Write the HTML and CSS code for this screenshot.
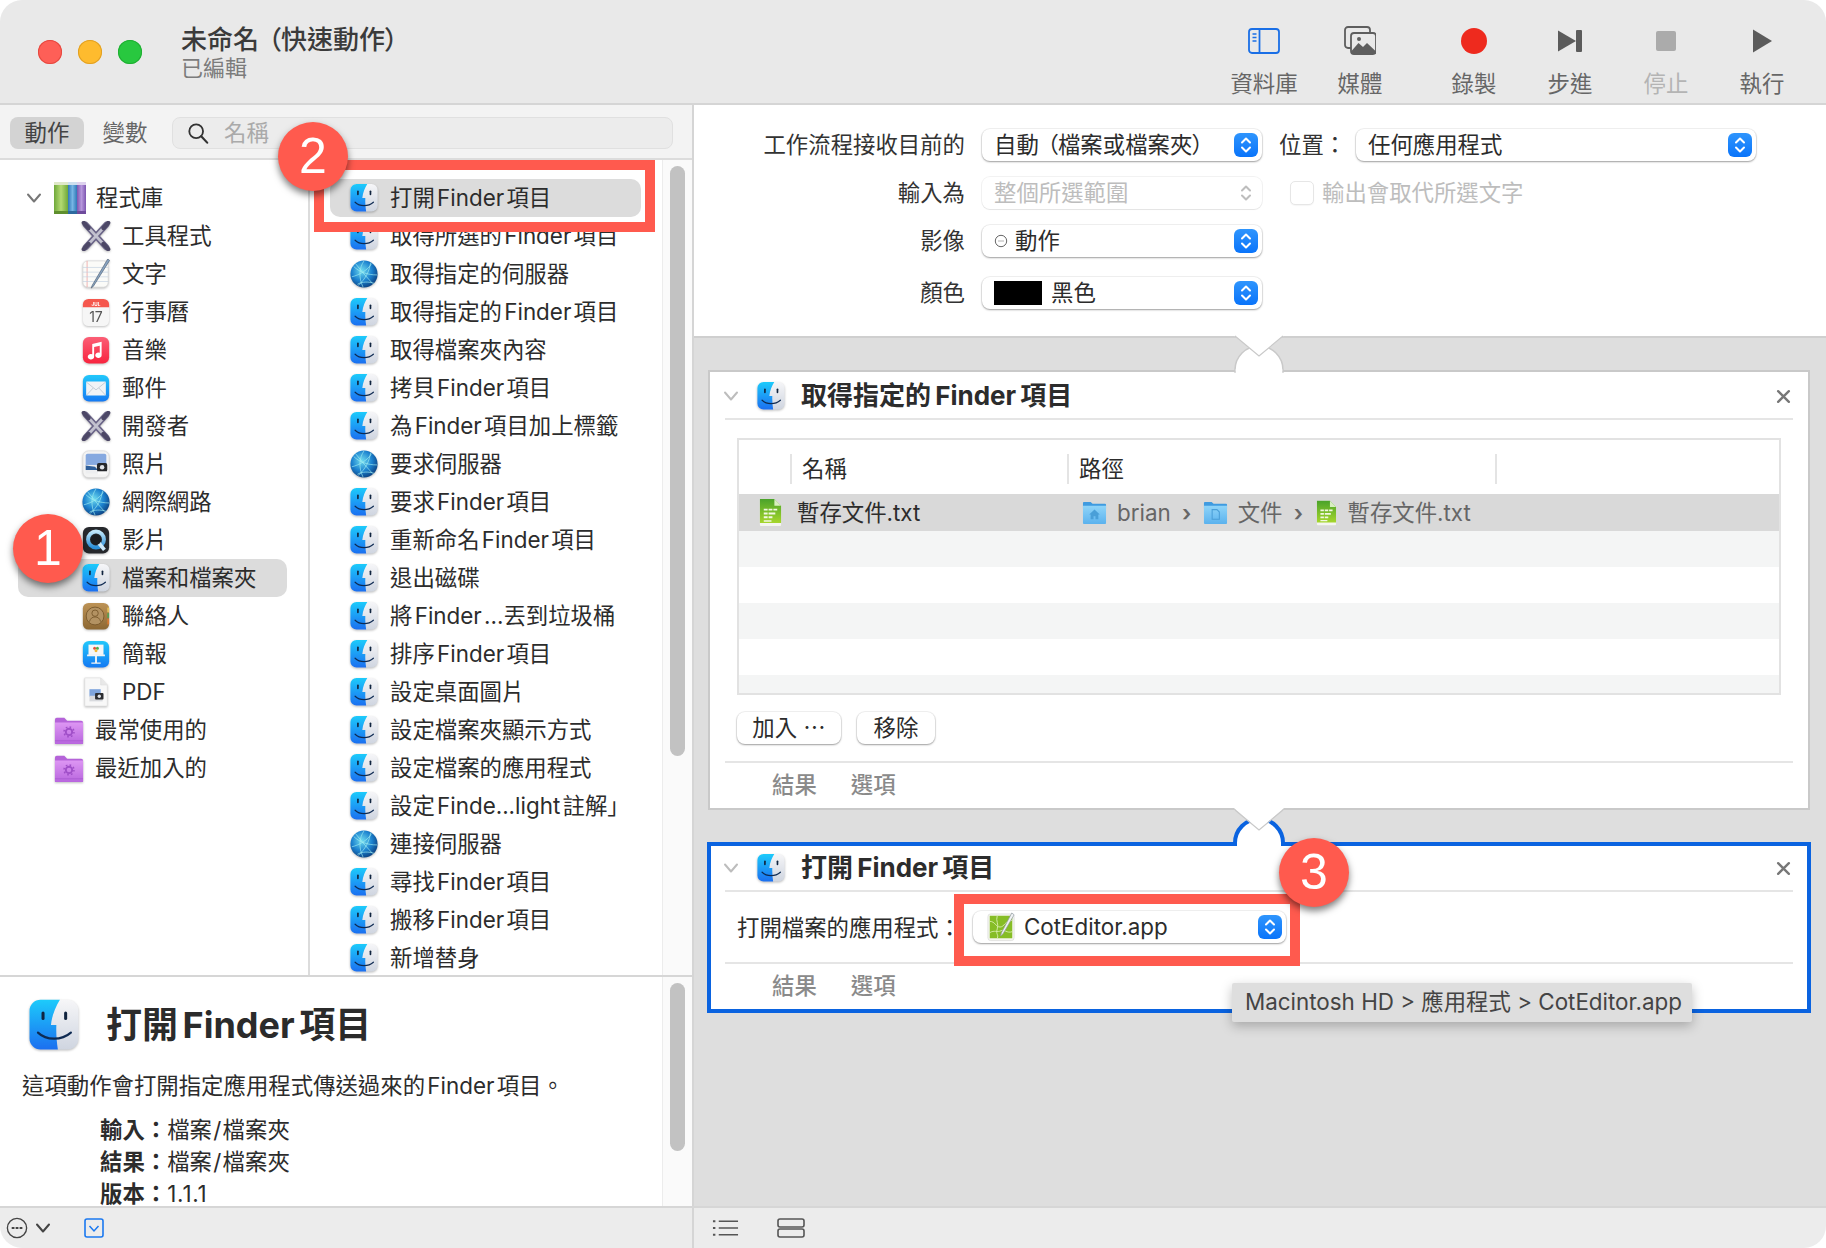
FILE: index.html
```html
<!DOCTYPE html>
<html lang="zh-Hant">
<head>
<meta charset="utf-8">
<title>未命名（快速動作）</title>
<link rel="stylesheet" href="styles.css">
</head>
<body>
<svg class="sprite" xmlns="http://www.w3.org/2000/svg">
  <defs>
    <linearGradient id="gFinderB" x1="0" y1="0" x2="0" y2="1"><stop offset="0" stop-color="#1dcbfb"/><stop offset="1" stop-color="#1b6ff0"/></linearGradient>
    <linearGradient id="gFinderW" x1="0" y1="0" x2="0" y2="1"><stop offset="0" stop-color="#f6f6f8"/><stop offset="1" stop-color="#cfd5e0"/></linearGradient>
    <radialGradient id="gGlobe" cx=".42" cy=".38" r=".68"><stop offset="0" stop-color="#6fdcef"/><stop offset=".55" stop-color="#1c82cf"/><stop offset="1" stop-color="#0a3a78"/></radialGradient>
    <linearGradient id="gStep" x1="0" y1="0" x2="0" y2="1"><stop offset="0" stop-color="#2f95fd"/><stop offset="1" stop-color="#0a74fa"/></linearGradient>
    <linearGradient id="gMusic" x1="0" y1="0" x2="0" y2="1"><stop offset="0" stop-color="#fb5f76"/><stop offset="1" stop-color="#f8233e"/></linearGradient>
    <linearGradient id="gBlue" x1="0" y1="0" x2="0" y2="1"><stop offset="0" stop-color="#22c8fb"/><stop offset="1" stop-color="#1479f3"/></linearGradient>
    <linearGradient id="gBrown" x1="0" y1="0" x2="0" y2="1"><stop offset="0" stop-color="#bd9356"/><stop offset="1" stop-color="#8c6733"/></linearGradient>
    <linearGradient id="gPurple" x1="0" y1="0" x2="0" y2="1"><stop offset="0" stop-color="#dd96f3"/><stop offset="1" stop-color="#b866de"/></linearGradient>
    <linearGradient id="gFolderBlue" x1="0" y1="0" x2="0" y2="1"><stop offset="0" stop-color="#8fd4f8"/><stop offset="1" stop-color="#5bb2ee"/></linearGradient>
    <linearGradient id="gTxt" x1="0" y1="0" x2="0" y2="1"><stop offset="0" stop-color="#4aa32a"/><stop offset="1" stop-color="#a6d62c"/></linearGradient>
    <linearGradient id="gQt" x1="0" y1="0" x2="0" y2="1"><stop offset="0" stop-color="#bfe6fa"/><stop offset="1" stop-color="#2a8fd8"/></linearGradient>
    <linearGradient id="gBookG" x1="0" y1="0" x2="1" y2="0"><stop offset="0" stop-color="#6fa83a"/><stop offset=".5" stop-color="#b4da72"/><stop offset="1" stop-color="#6fa83a"/></linearGradient>
    <linearGradient id="gBookB" x1="0" y1="0" x2="1" y2="0"><stop offset="0" stop-color="#2f79b8"/><stop offset=".5" stop-color="#77b5e4"/><stop offset="1" stop-color="#2f79b8"/></linearGradient>
    <linearGradient id="gBookP" x1="0" y1="0" x2="1" y2="0"><stop offset="0" stop-color="#7d55b0"/><stop offset=".5" stop-color="#b697dc"/><stop offset="1" stop-color="#7d55b0"/></linearGradient>
    <symbol id="finder" viewBox="0 0 32 32">
      <rect x="1.5" y="1" width="29" height="29.5" rx="6.5" fill="url(#gFinderW)"/>
      <path d="M8 1h11.500c-2.400 4-4.700 9-5.300 15h3.200c-.2 5 .2 10 .9 14.500H8A6.500 6.500 0 0 1 1.500 24V7.500A6.500 6.500 0 0 1 8 1z" fill="url(#gFinderB)"/>
      <rect x="8.600" y="8" width="1.800" height="5" rx=".9" fill="#10243f"/>
      <rect x="22" y="8" width="1.800" height="5" rx=".9" fill="#10243f"/>
      <path d="M6.500 20.500c5 4.800 14 4.800 19.500 0" fill="none" stroke="#0e2a52" stroke-width="1.300" stroke-linecap="round"/>
    </symbol>
    <symbol id="globe" viewBox="0 0 32 32">
      <circle cx="16" cy="16" r="14.500" fill="url(#gGlobe)"/>
      <g fill="none" stroke="#a4f0f2" stroke-width=".8" opacity=".85">
        <path d="M5 8c6 6 15 9 25 9M16 2c-5 7-6 18-1 28M23 4c-1 8-5 17-13 24M3 19c8-2 17-7 21-14M9 27c5-3 12-3 18-1M16 16l9 10M16 16l-9-11"/>
      </g>
    </symbol>
    <symbol id="tools" viewBox="0 0 32 32">
      <g stroke-linecap="round">
        <path d="M5 4l22 24M27 4L5 28" stroke="#6a6488" stroke-width="6.400"/>
        <path d="M5 4l22 24M27 4L5 28" stroke="#c2c1cf" stroke-width="2.800"/>
        <path d="M3 2l5 5.500M29 2l-5 5.500M3 30l5-5.500M29 30l-5-5.500" stroke="#4c4766" stroke-width="4.600"/>
      </g>
    </symbol>
    <symbol id="note" viewBox="0 0 32 32">
      <rect x="2" y="2" width="27" height="28" rx="5" fill="#fbfbf8" stroke="#d6d6d6" stroke-width=".8"/>
      <path d="M6.500 2v28" stroke="#ee9d9d" stroke-width=".8"/>
      <path d="M2 9h27M2 14h27M2 19h27M2 24h27" stroke="#c2cfe0" stroke-width=".7"/>
      <path d="M28.500 0L12 28l-1.200 3 2.400-1.900L30.500 1.500z" fill="#8aa6c4" stroke="#4f5f71" stroke-width=".7"/>
    </symbol>
    <symbol id="calendar" viewBox="0 0 32 32">
      <rect x="2" y="2" width="28" height="29" rx="6" fill="#f6f6f6"/>
      <path d="M8 2h16a6 6 0 0 1 6 6v3H2V8a6 6 0 0 1 6-6z" fill="#f5574d"/>
      <text class="cal-month" x="16" y="9.300" text-anchor="middle">JUL</text>
      <text class="cal-day" x="16" y="26.500" text-anchor="middle">17</text>
    </symbol>
    <symbol id="music" viewBox="0 0 32 32">
      <rect x="2" y="2" width="28" height="28.500" rx="6.500" fill="url(#gMusic)"/>
      <path d="M12 9.500l10-2.300v14.300a3.400 2.900 0 1 1-2-2.600v-7.400l-6 1.400v10.200a3.400 2.900 0 1 1-2-2.600z" fill="#fff"/>
    </symbol>
    <symbol id="mail" viewBox="0 0 32 32">
      <rect x="2" y="2" width="28" height="28.500" rx="6.500" fill="url(#gBlue)"/>
      <rect x="5.500" y="9" width="21" height="15" rx="1" fill="#f1f3f6"/>
      <path d="M5.500 9.500L16 18l10.500-8.500M5.500 24l7.500-8M26.500 24L19 16" fill="none" stroke="#b6c0cc" stroke-width=".8"/>
    </symbol>
    <symbol id="photo" viewBox="0 0 32 32">
      <rect x="2" y="2" width="28" height="28.500" rx="6" fill="#f3f3f3" stroke="#d8d8d8" stroke-width=".7"/>
      <path d="M7 5h18a2 2 0 0 1 2 2v11H5V7a2 2 0 0 1 2-2z" fill="#86a9e0"/>
      <rect x="5" y="17" width="22" height="9" fill="#edeef0"/>
      <path d="M5 17.500l10 1.500 3 3.500H5z" fill="#2f5f9a"/>
      <rect x="17" y="15" width="11" height="9" rx="2" fill="#25272b"/>
      <circle cx="22.500" cy="19.500" r="2.400" fill="#dfe3e8"/>
      <rect x="18" y="24" width="9" height="3" fill="#fafafa"/>
    </symbol>
    <symbol id="qt" viewBox="0 0 32 32">
      <rect x="2" y="2" width="28" height="28.500" rx="6.500" fill="#26282c"/>
      <circle cx="16" cy="15.500" r="8.500" fill="none" stroke="url(#gQt)" stroke-width="4.200"/>
      <path d="M18 18l7 8.500" stroke="#cde9fa" stroke-width="4"/>
      <circle cx="16" cy="15.500" r="5.500" fill="#1a1c20"/>
    </symbol>
    <symbol id="contacts" viewBox="0 0 32 32">
      <rect x="2" y="2" width="28" height="28.500" rx="6" fill="url(#gBrown)"/>
      <rect x="28" y="7" width="2" height="5" fill="#e4c15a"/><rect x="28" y="13" width="2" height="5" fill="#5a9d52"/><rect x="28" y="19" width="2" height="6" fill="#d67a33"/>
      <circle cx="15" cy="16" r="9.500" fill="#b39262" stroke="#7a5a2d" stroke-width="1"/>
      <circle cx="15" cy="13" r="3.400" fill="none" stroke="#7a5a2d" stroke-width="1"/>
      <path d="M9 22c1-3.500 3-5 6-5s5 1.500 6 5" fill="none" stroke="#7a5a2d" stroke-width="1"/>
    </symbol>
    <symbol id="keynote" viewBox="0 0 32 32">
      <rect x="2" y="2" width="28" height="28.500" rx="6.500" fill="url(#gBlue)"/>
      <rect x="8" y="6" width="16" height="11" fill="#f6f6f6"/>
      <path d="M6.500 16.500h19v1.800h-19zM15 18h2v7h-2zM11 25h10v1.500H11z" fill="#f4f4f4"/>
      <circle cx="14.500" cy="10" r="1.600" fill="#e8503c"/><circle cx="17.500" cy="10" r="1.600" fill="#4cae4f"/><circle cx="16" cy="12.500" r="1.600" fill="#f2b632"/>
    </symbol>
    <symbol id="pdf" viewBox="0 0 32 32">
      <path d="M4 1h17l7 7.500V30a1 1 0 0 1-1 1H5a1 1 0 0 1-1-1z" fill="#f8f8f8" stroke="#dedede" stroke-width=".7"/>
      <path d="M21 1V8.500h7" fill="#e8e8e8" stroke="#dedede" stroke-width=".7"/>
      <rect x="9" y="13" width="12" height="8" fill="#7fa5dd"/>
      <rect x="9" y="20" width="14" height="6" fill="#d8dade"/>
      <rect x="15" y="17" width="9" height="7" rx="1" fill="#2b2d31"/>
      <circle cx="19.500" cy="20.500" r="1.800" fill="#dfe3e8"/>
    </symbol>
    <symbol id="folder" viewBox="0 0 32 32">
      <path d="M1 5a2 2 0 0 1 2-2h8l3 3h15a2 2 0 0 1 2 2v22a1 1 0 0 1-1 1H2a1 1 0 0 1-1-1z" fill="#b563d9"/>
      <path d="M1 8h30v22a1 1 0 0 1-1 1H2a1 1 0 0 1-1-1z" fill="url(#gPurple)"/>
      <path d="M1 27.500h30" stroke="#a554cd" stroke-width=".7"/>
      <circle cx="16" cy="18" r="3.400" fill="none" stroke="#a04fc8" stroke-width="2"/>
      <circle cx="16" cy="18" r="5.300" fill="none" stroke="#a04fc8" stroke-width="1.600" stroke-dasharray="1.800 2.360"/>
    </symbol>
    <symbol id="library" viewBox="0 0 32 34">
      <rect x="0" y="1" width="14" height="32" rx="1.500" fill="url(#gBookG)"/>
      <rect x="0" y="1" width="14" height="3" fill="#dfe8c8"/>
      <rect x="0" y="30" width="14" height="3" fill="#5f8f2e"/>
      <rect x="14" y="1" width="9" height="32" rx="1" fill="url(#gBookB)"/>
      <rect x="14" y="1" width="9" height="3" fill="#cddfee"/>
      <rect x="14" y="30" width="9" height="3" fill="#2d6a9f"/>
      <rect x="23" y="1" width="9" height="32" rx="1" fill="url(#gBookP)"/>
      <rect x="23" y="1" width="9" height="3" fill="#ded2ee"/>
      <rect x="23" y="30" width="9" height="3" fill="#6e4b9c"/>
    </symbol>
    <symbol id="txt" viewBox="0 0 26 30">
      <path d="M2 1h15l7 7v20a1 1 0 0 1-1 1H3a1 1 0 0 1-1-1z" fill="#f4f5f0"/>
      <path d="M2 1h15l7 7v18H2z" fill="url(#gTxt)"/>
      <path d="M17 1v7h7z" fill="#d8eec0"/>
      <path d="M6 11h4v2H6zM11 11h4v2h-4zM16 11h4v2h-4zM6 15h4v2H6zM11 15h7v2h-7zM6 19h4v2H6zM11 19h4v2h-4zM6 23h8v1.500H6z" fill="#f2f8e2"/>
    </symbol>
    <symbol id="folder-home" viewBox="0 0 26 26">
      <path d="M1 3a1 1 0 0 1 1-1h7l2 2h13a1 1 0 0 1 1 1v4H1z" fill="#3f9be0"/>
      <path d="M1 6h24v18a1 1 0 0 1-1 1H2a1 1 0 0 1-1-1z" fill="url(#gFolderBlue)"/>
      <path d="M13 10l-5.500 5h1.500v5h3v-3h2v3h3v-5h1.500z" fill="#4a9fd8"/>
    </symbol>
    <symbol id="folder-doc" viewBox="0 0 26 26">
      <path d="M1 3a1 1 0 0 1 1-1h7l2 2h13a1 1 0 0 1 1 1v4H1z" fill="#3f9be0"/>
      <path d="M1 6h24v18a1 1 0 0 1-1 1H2a1 1 0 0 1-1-1z" fill="url(#gFolderBlue)"/>
      <path d="M9.500 10h5l2.500 2.500V20H9.500z" fill="none" stroke="#4a9fd8" stroke-width="1.100"/>
    </symbol>
    <symbol id="cot" viewBox="0 0 32 32">
      <rect x="2" y="2" width="28" height="28.500" rx="3" fill="#f4f6ee" stroke="#d8d8d8" stroke-width=".7"/>
      <rect x="4" y="4" width="24" height="24" fill="#86bd26"/>
      <path d="M4 10c6 0 6 6 11 6s5-7 13-7M4 22c5-3 8 0 12-2s6 3 12 1M12 4c-2 6 2 8 0 14s2 6 0 10" fill="none" stroke="#d5ecaa" stroke-width="1"/>
      <path d="M27.500 1l-11 21-1 3.500 2.700-2.300L30 3z" fill="#f0f2f4" stroke="#8d969e" stroke-width=".7"/>
    </symbol>
    <symbol id="stepper" viewBox="0 0 24 24">
      <rect width="24" height="24" rx="6" fill="url(#gStep)"/>
      <path d="M8 9.500l4-4 4 4M8 14.500l4 4 4-4" fill="none" stroke="#fff" stroke-width="2" stroke-linecap="round" stroke-linejoin="round"/>
    </symbol>
    <symbol id="stepper-off" viewBox="0 0 24 24">
      <path d="M8 9.500l4-4 4 4M8 14.500l4 4 4-4" fill="none" stroke="#bdbdbd" stroke-width="2" stroke-linecap="round" stroke-linejoin="round"/>
    </symbol>
    <symbol id="chev" viewBox="0 0 16 12">
      <path d="M2 2.500l6 7 6-7" fill="none" stroke="currentColor" stroke-width="2" stroke-linecap="round" stroke-linejoin="round"/>
    </symbol>
  </defs>
</svg>

<div class="window">
  <header class="toolbar">
    <div class="lights">
      <span class="light light-red"></span>
      <span class="light light-yellow"></span>
      <span class="light light-green"></span>
    </div>
    <div class="doc">
      <div class="doc-title">未命名<span class="paren">（快速動作）</span></div>
      <div class="doc-sub">已編輯</div>
    </div>
    <nav class="tools">
      <div class="tool">
        <svg class="tool-icon" viewBox="0 0 32 30"><rect x="1" y="3" width="30" height="24" rx="3" fill="none" stroke="#1a6fe6" stroke-width="1.800"/><path d="M11.500 3v24" stroke="#1a6fe6" stroke-width="1.800"/><path d="M4.500 8h4M4.500 11.500h4M4.500 15h4" stroke="#1a6fe6" stroke-width="1.500"/></svg>
        <span class="tool-label">資料庫</span>
      </div>
      <div class="tool">
        <svg class="tool-icon" viewBox="0 0 32 30"><rect x="1" y="1" width="25" height="21" rx="3" fill="none" stroke="#5e5e5e" stroke-width="1.800"/><rect x="7" y="7" width="25" height="21" rx="3" fill="#e9e9e9" stroke="#5e5e5e" stroke-width="1.800"/><path d="M7.500 25l7-8 4.500 4 4-4 8.500 8v2a1 1 0 0 1-1 1H9a1.500 1.500 0 0 1-1.500-1.500z" fill="#5e5e5e"/><circle cx="15" cy="13" r="2" fill="#5e5e5e"/></svg>
        <span class="tool-label">媒體</span>
      </div>
      <div class="tool tool-gap">
        <span class="record"></span>
        <span class="tool-label">錄製</span>
      </div>
      <div class="tool">
        <svg class="tool-icon" viewBox="0 0 32 30"><path d="M4 4.500l18 10.500-18 10.500z" fill="#5b5b5b"/><rect x="22" y="4" width="6" height="22" rx="1" fill="#5b5b5b"/></svg>
        <span class="tool-label">步進</span>
      </div>
      <div class="tool tool-off">
        <span class="stop"></span>
        <span class="tool-label">停止</span>
      </div>
      <div class="tool">
        <svg class="tool-icon" viewBox="0 0 32 30"><path d="M7 3.500l19 11.500-19 11.500z" fill="#5b5b5b"/></svg>
        <span class="tool-label">執行</span>
      </div>
    </nav>
  </header>

  <main class="main">
    <section class="left">
      <div class="tabs">
        <span class="tab tab-on">動作</span>
        <span class="tab">變數</span>
        <div class="search">
          <svg class="search-icon" viewBox="0 0 24 24"><circle cx="10" cy="10" r="7.500" fill="none" stroke="#333" stroke-width="2"/><path d="M15.500 15.500l6.500 7" stroke="#333" stroke-width="2.400" stroke-linecap="round"/></svg>
          <span class="search-text">名稱</span>
        </div>
      </div>
      <div class="browser">
        <ul class="source">
          <li class="src-top"><svg class="src-chev"><use href="#chev"/></svg><svg class="src-icon-top"><use href="#library"/></svg><span>程式庫</span></li>
          <li class="src"><svg class="ic"><use href="#tools"/></svg><span>工具程式</span></li>
          <li class="src"><svg class="ic"><use href="#note"/></svg><span>文字</span></li>
          <li class="src"><svg class="ic"><use href="#calendar"/></svg><span>行事曆</span></li>
          <li class="src"><svg class="ic"><use href="#music"/></svg><span>音樂</span></li>
          <li class="src"><svg class="ic"><use href="#mail"/></svg><span>郵件</span></li>
          <li class="src"><svg class="ic"><use href="#tools"/></svg><span>開發者</span></li>
          <li class="src"><svg class="ic"><use href="#photo"/></svg><span>照片</span></li>
          <li class="src"><svg class="ic"><use href="#globe"/></svg><span>網際網路</span></li>
          <li class="src"><svg class="ic"><use href="#qt"/></svg><span>影片</span></li>
          <li class="src src-on"><svg class="ic"><use href="#finder"/></svg><span>檔案和檔案夾</span></li>
          <li class="src"><svg class="ic"><use href="#contacts"/></svg><span>聯絡人</span></li>
          <li class="src"><svg class="ic"><use href="#keynote"/></svg><span>簡報</span></li>
          <li class="src"><svg class="ic"><use href="#pdf"/></svg><span>PDF</span></li>
          <li class="src-folder"><svg class="ic"><use href="#folder"/></svg><span>最常使用的</span></li>
          <li class="src-folder"><svg class="ic"><use href="#folder"/></svg><span>最近加入的</span></li>
        </ul>
        <ul class="actions">
          <li class="act act-on"><svg class="ic"><use href="#finder"/></svg><span>打開 Finder 項目</span></li>
          <li class="act"><svg class="ic"><use href="#finder"/></svg><span>取得所選的 Finder 項目</span></li>
          <li class="act"><svg class="ic"><use href="#globe"/></svg><span>取得指定的伺服器</span></li>
          <li class="act"><svg class="ic"><use href="#finder"/></svg><span>取得指定的 Finder 項目</span></li>
          <li class="act"><svg class="ic"><use href="#finder"/></svg><span>取得檔案夾內容</span></li>
          <li class="act"><svg class="ic"><use href="#finder"/></svg><span>拷貝 Finder 項目</span></li>
          <li class="act"><svg class="ic"><use href="#finder"/></svg><span>為 Finder 項目加上標籤</span></li>
          <li class="act"><svg class="ic"><use href="#globe"/></svg><span>要求伺服器</span></li>
          <li class="act"><svg class="ic"><use href="#finder"/></svg><span>要求 Finder 項目</span></li>
          <li class="act"><svg class="ic"><use href="#finder"/></svg><span>重新命名 Finder 項目</span></li>
          <li class="act"><svg class="ic"><use href="#finder"/></svg><span>退出磁碟</span></li>
          <li class="act"><svg class="ic"><use href="#finder"/></svg><span>將 Finder ...丟到垃圾桶</span></li>
          <li class="act"><svg class="ic"><use href="#finder"/></svg><span>排序 Finder 項目</span></li>
          <li class="act"><svg class="ic"><use href="#finder"/></svg><span>設定桌面圖片</span></li>
          <li class="act"><svg class="ic"><use href="#finder"/></svg><span>設定檔案夾顯示方式</span></li>
          <li class="act"><svg class="ic"><use href="#finder"/></svg><span>設定檔案的應用程式</span></li>
          <li class="act"><svg class="ic"><use href="#finder"/></svg><span>設定 Finde...light 註解」</span></li>
          <li class="act"><svg class="ic"><use href="#globe"/></svg><span>連接伺服器</span></li>
          <li class="act"><svg class="ic"><use href="#finder"/></svg><span>尋找 Finder 項目</span></li>
          <li class="act"><svg class="ic"><use href="#finder"/></svg><span>搬移 Finder 項目</span></li>
          <li class="act"><svg class="ic"><use href="#finder"/></svg><span>新增替身</span></li>
        </ul>
        <div class="track track-list"><span class="thumb thumb-list"></span></div>
      </div>
      <div class="info">
        <div class="info-body">
          <div class="info-head">
            <svg class="info-icon"><use href="#finder"/></svg>
            <h1 class="info-title">打開 Finder 項目</h1>
          </div>
          <p class="info-desc">這項動作會打開指定應用程式傳送過來的 Finder 項目。</p>
          <dl class="info-meta">
            <div class="meta-row"><dt>輸入：</dt><dd>檔案 / 檔案夾</dd></div>
            <div class="meta-row"><dt>結果：</dt><dd>檔案 / 檔案夾</dd></div>
            <div class="meta-row"><dt>版本：</dt><dd class="meta-version">1.1.1</dd></div>
          </dl>
        </div>
        <div class="track track-info"><span class="thumb thumb-info"></span></div>
      </div>
    </section>

    <section class="right">
      <form class="form">
        <label class="form-label">工作流程接收目前的</label>
        <div class="popup"><span class="popup-text">自動<span class="paren paren-small">（檔案或檔案夾）</span></span><svg class="stepper"><use href="#stepper"/></svg></div>
        <label class="form-label-inline">位置：</label>
        <div class="popup popup-wide"><span class="popup-text">任何應用程式</span><svg class="stepper"><use href="#stepper"/></svg></div>

        <label class="form-label">輸入為</label>
        <div class="popup popup-off"><span class="popup-text">整個所選範圍</span><svg class="stepper"><use href="#stepper-off"/></svg></div>
        <div class="check"><span class="check-box"></span><span>輸出會取代所選文字</span></div>

        <label class="form-label">影像</label>
        <div class="popup"><svg class="more-mini" viewBox="0 0 14 14"><circle cx="7" cy="7" r="5.700" fill="none" stroke="#666" stroke-width="1"/><path d="M4.500 7h1M6.500 7h1M8.500 7h1" stroke="#666" stroke-width="1"/></svg><span class="popup-text">動作</span><svg class="stepper"><use href="#stepper"/></svg></div>
        <span class="form-fill"></span>

        <label class="form-label form-last">顏色</label>
        <div class="popup form-last"><span class="swatch"></span><span class="popup-text">黑色</span><svg class="stepper"><use href="#stepper"/></svg></div>
      </form>

      <div class="canvas">
        <article class="card card-first">
          <svg class="link link-top" viewBox="0 0 52 36"><path d="M2 36v-2a24 24 0 0 1 48 0v2z" fill="#fff" stroke="#c9c9c9" stroke-width="1.500"/><path d="M2.800 33h46.400v5H2.800z" fill="#fff"/><path d="M-1-2h54L26 20z" fill="#fff"/><path d="M2 0l24 20L50 0" fill="none" stroke="#c9c9c9" stroke-width="1.200"/></svg>
          <div class="card-head">
            <svg class="card-chev"><use href="#chev"/></svg>
            <svg class="card-icon"><use href="#finder"/></svg>
            <h2 class="card-title">取得指定的 Finder 項目</h2>
            <svg class="card-close" viewBox="0 0 14 14"><path d="M2 2l10 10M12 2L2 12" stroke="#777" stroke-width="2.200" stroke-linecap="round"/></svg>
          </div>
          <div class="table">
            <div class="thead">
              <span class="th th-first"></span><span class="th">名稱</span><span class="th">路徑</span><span class="th"></span>
            </div>
            <div class="tr tr-on">
              <div class="td-name"><svg class="ic-txt"><use href="#txt"/></svg><span>暫存文件.txt</span></div>
              <div class="td-path">
                <svg class="ic-folder"><use href="#folder-home"/></svg><span>brian</span><span class="crumb">›</span>
                <svg class="ic-folder"><use href="#folder-doc"/></svg><span>文件</span><span class="crumb">›</span>
                <svg class="ic-txt-small"><use href="#txt"/></svg><span>暫存文件.txt</span>
              </div>
            </div>
            <div class="tr tr-alt"></div>
            <div class="tr"></div>
            <div class="tr tr-alt"></div>
            <div class="tr"></div>
            <div class="tr tr-alt"></div>
          </div>
          <div class="btns">
            <span class="btn btn-add">加入 ⋯</span>
            <span class="btn btn-remove">移除</span>
          </div>
          <div class="card-foot"><span>結果</span><span>選項</span></div>
        </article>

        <article class="card card-sel">
          <svg class="link link-sel" viewBox="0 0 56 36"><path d="M4 36v-3a24 24 0 0 1 48 0v3" fill="#fff" stroke="#0a63e0" stroke-width="4"/><path d="M6 32h44v5H6z" fill="#fff"/><path d="M3-2h50L28 20z" fill="#fff"/><path d="M4 0l24 20L52 0" fill="none" stroke="#c9c9c9" stroke-width="1.200"/></svg>
          <div class="card-head card-head-sel">
            <svg class="card-chev"><use href="#chev"/></svg>
            <svg class="card-icon"><use href="#finder"/></svg>
            <h2 class="card-title">打開 Finder 項目</h2>
            <svg class="card-close" viewBox="0 0 14 14"><path d="M2 2l10 10M12 2L2 12" stroke="#777" stroke-width="2.200" stroke-linecap="round"/></svg>
          </div>
          <div class="open-row">
            <label class="open-label">打開檔案的應用程式：</label>
            <div class="popup popup-app"><svg class="ic-cot"><use href="#cot"/></svg><span class="popup-text app-name">CotEditor.app</span><svg class="stepper"><use href="#stepper"/></svg></div>
          </div>
          <div class="card-foot"><span>結果</span><span>選項</span></div>
        </article>
      </div>
    </section>
  </main>

  <footer class="bottom">
    <div class="bottom-left">
      <svg class="more-icon" viewBox="0 0 24 24"><circle cx="12" cy="12" r="10.500" fill="none" stroke="#444" stroke-width="1.500"/><path d="M7 12h1.500M11.300 12h1.500M15.600 12h1.500" stroke="#444" stroke-width="2" stroke-linecap="round"/></svg>
      <svg class="bottom-chev"><use href="#chev"/></svg>
      <svg class="box-icon" viewBox="0 0 20 20"><rect x="1" y="1" width="18" height="18" rx="2" fill="none" stroke="#1a78f0" stroke-width="1.600"/><path d="M5.500 8l4.500 5 4.500-5" fill="none" stroke="#1a78f0" stroke-width="1.500"/></svg>
    </div>
    <div class="bottom-right">
      <svg class="list-icon" viewBox="0 0 28 18"><path d="M7 2h20M7 9h20M7 16h20" stroke="#555" stroke-width="1.600"/><path d="M1 2h2.500M1 9h2.500M1 16h2.500" stroke="#555" stroke-width="2"/></svg>
      <svg class="stack-icon" viewBox="0 0 28 20"><rect x="1" y="1" width="26" height="8" rx="2" fill="none" stroke="#555" stroke-width="1.600"/><rect x="1" y="11" width="26" height="8" rx="2" fill="none" stroke="#555" stroke-width="1.600"/></svg>
    </div>
  </footer>

  <div class="mark mark-action"></div>
  <div class="mark mark-app"></div>
  <div class="badge badge-1">1</div>
  <div class="badge badge-2">2</div>
  <div class="badge badge-3">3</div>
  <div class="tooltip">Macintosh HD &gt; 應用程式 &gt; CotEditor.app</div>
</div>
</body>
</html>
```

FILE: styles.css
```css
* { box-sizing: border-box; }
html, body { margin: 0; padding: 0; }
body {
  width: 1826px;
  height: 1248px;
  overflow: hidden;
  background: #fff;
  font-family: "Inter", "Noto Sans CJK TC", sans-serif;
  font-size: 22.4px;
  line-height: 30px;
  color: #2c2c2c;
}
ul, dl, dd, h1, h2, p { margin: 0; padding: 0; list-style: none; }
.sprite { position: absolute; width: 0; height: 0; }
.cal-month { font: 700 5px "Inter", sans-serif; fill: #fff; }
.cal-day { font: 400 15px "Inter", sans-serif; fill: #555; }

.window {
  position: relative;
  width: 1826px;
  height: 1248px;
  display: flex;
  flex-direction: column;
  border-radius: 22px;
  overflow: hidden;
  background: #fff;
}

/* toolbar */
.toolbar {
  height: 105px;
  flex: none;
  display: flex;
  align-items: center;
  background: #e9e9e9;
  border-bottom: 2px solid #d5d5d5;
  padding-left: 38px;
  padding-right: 16px;
}
.lights { display: flex; gap: 16px; }
.light { width: 24px; height: 24px; border-radius: 50%; }
.light-red { background: #fe5f57; box-shadow: inset 0 0 0 1px #e5483f; }
.light-yellow { background: #febb2e; box-shadow: inset 0 0 0 1px #e1a023; }
.light-green { background: #28c83f; box-shadow: inset 0 0 0 1px #1fae32; }
.doc { margin-left: 39px; }
.doc-title { font-size: 26px; line-height: 34px; font-weight: 500; color: #3b3b3b; }
.paren { font-feature-settings: "palt"; margin-left: 9px; }
.paren-small { margin-left: 8px; }
.doc-sub { font-size: 22px; line-height: 24px; margin-top: -1px; color: #7c7c7c; }
.tools { margin-left: auto; display: flex; }
.tool {
  width: 96px;
  height: 103px;
  display: flex;
  flex-direction: column;
  align-items: center;
  padding-top: 26px;
  color: #666;
}
.tool-gap { margin-left: 18px; }
.tool-off { color: #b4b4b4; }
.tool-icon { width: 32px; height: 30px; display: block; }
.tool-label { margin-top: 15px; line-height: 26px; }
.record { width: 26px; height: 26px; margin: 2px 0; border-radius: 50%; background: #ee2a1e; }
.stop { width: 20px; height: 20px; margin: 5px 0; border-radius: 2px; background: #ababab; }

/* main */
.main { flex: 1; display: flex; min-height: 0; }
.left {
  width: 694px;
  flex: none;
  display: flex;
  flex-direction: column;
  border-right: 2px solid #d5d5d5;
}
.tabs {
  height: 55px;
  flex: none;
  display: flex;
  align-items: flex-start;
  padding: 12px 0 0 10px;
  background: #f3f3f3;
  border-bottom: 2px solid #dcdcdc;
  color: #666;
}
.tab { width: 74px; height: 32px; line-height: 32px; text-align: center; border-radius: 8px; }
.tab + .tab { width: 82px; }
.tab-on { background: #d3d3d3; color: #444; }
.search {
  margin-left: 6px;
  width: 501px;
  height: 32px;
  display: flex;
  align-items: center;
  gap: 15px;
  padding-left: 14px;
  background: #ececec;
  border: 1px solid #e0e0e0;
  border-radius: 8px;
}
.search-icon { width: 22px; height: 22px; }
.search-text { color: #aaa; }

.browser {
  height: 817px;
  flex: none;
  display: flex;
  overflow: hidden;
  border-bottom: 2px solid #d6d6d6;
}
.source {
  width: 310px;
  flex: none;
  padding-top: 19px;
  border-right: 2px solid #dcdcdc;
}
.source li { height: 38px; display: flex; align-items: center; }
.ic { width: 30px; height: 30px; flex: none; filter: drop-shadow(0 1px 1px rgba(0,0,0,.25)); }
.src-top { padding-left: 26px; }
.src-chev { width: 16px; height: 12px; color: #777; flex: none; }
.src-icon-top { width: 32px; height: 34px; margin-left: 12px; margin-right: 10px; flex: none; }
.src { margin-right: 21px; margin-left: 18px; border-radius: 10px; padding-left: 63px; }
.src .ic { margin-right: 11px; }
.src-on { background: #dcdcdc; }
.src-folder { padding-left: 54px; }
.src-folder .ic { margin-right: 11px; }

.actions { flex: 1; padding-top: 19px; min-width: 0; word-spacing: -4px; }
.act {
  height: 38px;
  margin: 0 21px 0 20px;
  padding-left: 19px;
  display: flex;
  align-items: center;
  gap: 11px;
  border-radius: 10px;
  white-space: nowrap;
}
.act-on { background: #dcdcdc; }

.track { width: 30px; flex: none; background: #fafafa; border-left: 1px solid #ececec; position: relative; padding: 6px 7px 0 7px; }
.thumb { display: block; width: 15px; border-radius: 8px; background: #c2c2c2; }
.thumb-list { height: 590px; }
.thumb-info { height: 168px; }

.info { flex: 1; display: flex; min-height: 0; overflow: hidden; }
.info-body { flex: 1; min-width: 0; }
.info-head { display: flex; align-items: center; gap: 25px; padding: 21px 0 0 27px; }
.info-icon { width: 54px; height: 54px; flex: none; filter: drop-shadow(0 1px 1px rgba(0,0,0,.25)); }
.info-title { font-size: 36px; line-height: 54px; font-weight: 700; color: #2b2b2b; word-spacing: -4px; }
.info-desc { margin-top: 19px; padding-left: 22px; word-spacing: -4px; white-space: nowrap; }
.info-meta { margin-top: 13px; padding-left: 100px; }
.meta-row { display: flex; line-height: 32px; }
.meta-row dt { font-weight: 700; }
.meta-row dd { word-spacing: -5px; }
.meta-row .meta-version { letter-spacing: .8px; }

/* right */
.right { flex: 1; min-width: 0; display: flex; flex-direction: column; }
.form {
  height: 233px;
  flex: none;
  display: grid;
  grid-template-columns: 271px 280px 60px 400px;
  grid-auto-rows: 32px;
  column-gap: 17px;
  row-gap: 16px;
  align-items: center;
  padding-top: 24px;
  background: #fff;
  border-bottom: 2px solid #cfcfcf;
}
.form-label { text-align: right; color: #333; }
.form-label-inline { white-space: nowrap; color: #333; }
.form-last { position: relative; top: 4px; }
.form-fill { grid-column: 3 / 5; }
.popup {
  height: 32px;
  display: flex;
  align-items: center;
  padding: 0 4px 0 12px;
  background: #fff;
  border-radius: 8px;
  box-shadow: 0 0 0 1px rgba(0,0,0,.05), 0 1px 2px rgba(0,0,0,.35);
}
.popup-text { flex: 1; white-space: nowrap; }
.stepper { width: 24px; height: 24px; flex: none; }
.popup-wide { grid-column: 4; }
.popup-off { box-shadow: 0 0 0 1px rgba(0,0,0,.05), 0 1px 1px rgba(0,0,0,.06); }
.popup-off .popup-text { color: #bdbdbd; }
.check { grid-column: 3 / 5; margin-left: 11px; display: flex; align-items: center; gap: 8px; color: #bdbdbd; white-space: nowrap; }
.check-box { width: 24px; height: 24px; border-radius: 5px; border: 1px solid #e6e6e6; background: #fff; box-shadow: 0 1px 1px rgba(0,0,0,.04); }
.more-mini { width: 14px; height: 14px; margin-right: 7px; flex: none; }
.swatch { width: 48px; height: 24px; margin-right: 9px; background: #000; flex: none; }

.canvas {
  flex: 1;
  min-height: 0;
  display: flex;
  flex-direction: column;
  gap: 32px;
  padding: 32px 16px 0 14px;
  background: #dedede;
}
.card { position: relative; background: #fff; }
.card-first { height: 440px; border: 2px solid #c9c9c9; }
.card-sel { height: 171px; margin: 0 -1px; border: 4px solid #0a63e0; }
.link { position: absolute; overflow: visible; }
.link-top { width: 52px; height: 36px; left: 523px; top: -36px; }
.link-sel { width: 56px; height: 36px; left: 520px; top: -36px; }

.card-head {
  height: 48px;
  margin: 0 15px;
  display: flex;
  align-items: center;
  border-bottom: 2px solid #e5e5e5;
  padding-top: 2px;
}
.card-head-sel { height: 46px; padding-top: 0; margin: 0 14px; }
.card-chev { width: 16px; height: 12px; color: #bdbdbd; flex: none; margin-left: -2px; }
.card-icon { width: 30px; height: 30px; flex: none; margin-left: 17px; filter: drop-shadow(0 1px 1px rgba(0,0,0,.25)); }
.card-title { font-size: 26px; line-height: 34px; font-weight: 700; margin-left: 15px; color: #2c2c2c; word-spacing: -2px; white-space: nowrap; }
.card-close { width: 15px; height: 15px; margin-left: auto; margin-right: 2px; }

.table {
  height: 257px;
  margin: 18px 27px 0 27px;
  border: 2px solid #e2e2e2;
  overflow: hidden;
}
.thead { height: 54px; display: grid; grid-template-columns: 51px 277px 428px 1fr; align-items: center; padding-top: 4px; }
.th { height: 30px; line-height: 30px; padding-left: 10px; border-left: 2px solid #e4e4e4; }
.th-first { border-left: 0; }
.tr { height: 36px; }
.tr-on { height: 37px; display: grid; grid-template-columns: 328px 1fr; background: #d9d9d9; }
.tr-alt { background: #f4f5f5; }
.td-name { display: flex; align-items: center; gap: 14px; padding-left: 19px; }
.td-path { display: flex; align-items: center; gap: 10px; padding-left: 15px; color: #666; }
.ic-txt { width: 25px; height: 29px; flex: none; }
.ic-txt-small { width: 23px; height: 26px; flex: none; }
.ic-folder { width: 25px; height: 25px; flex: none; }
.crumb { width: 12px; text-align: center; font-weight: 600; }

.btns { display: flex; gap: 16px; margin: 17px 0 0 27px; }
.btn {
  height: 32px;
  line-height: 32px;
  text-align: center;
  background: #fff;
  border-radius: 8px;
  box-shadow: 0 0 0 1px rgba(0,0,0,.05), 0 1px 2px rgba(0,0,0,.35);
}
.btn-add { width: 104px; }
.btn-remove { width: 78px; }

.card-foot {
  margin: 17px 15px 0;
  padding-top: 7px;
  height: 47px;
  display: flex;
  gap: 34px;
  padding-left: 47px;
  border-top: 2px solid #e5e5e5;
  color: #8a8a8a;
  font-weight: 500;
}
.open-row { height: 70px; margin: 0 14px; display: flex; align-items: center; padding-left: 12px; padding-top: 2px; }
.open-label { width: 236px; flex: none; white-space: nowrap; }
.popup-app { width: 313px; padding-left: 13px; margin-top: -2px; }
.ic-cot { width: 30px; height: 30px; flex: none; }
.app-name { margin-left: 8px; }
.card-sel .card-foot { margin: 0 14px; }

/* bottom */
.bottom { height: 42px; flex: none; display: flex; background: #ececec; border-top: 2px solid #d6d6d6; }
.bottom-left { width: 694px; flex: none; display: flex; align-items: center; padding-left: 6px; border-right: 2px solid #d5d5d5; }
.more-icon { width: 22px; height: 22px; }
.bottom-chev { width: 16px; height: 12px; margin-left: 7px; color: #444; }
.box-icon { width: 20px; height: 20px; margin-left: 33px; }
.bottom-right { flex: 1; display: flex; align-items: center; padding-left: 18px; gap: 38px; }
.list-icon { width: 27px; height: 18px; }
.stack-icon { width: 28px; height: 20px; }

/* annotations */
.mark { position: absolute; border: 10px solid #ff5a4e; }
.mark-action { left: 314px; top: 160px; width: 341px; height: 72px; }
.mark-app { left: 954px; top: 894px; width: 346px; height: 72px; }
.badge {
  position: absolute;
  width: 70px;
  height: 69px;
  border-radius: 50%;
  background: #ff5a4e;
  color: #fff;
  font-family: "Liberation Sans", sans-serif;
  font-size: 50px;
  line-height: 69px;
  text-align: center;
  box-shadow: 0 4px 7px rgba(0,0,0,.5);
}
.badge-1 { left: 13px; top: 514px; }
.badge-2 { left: 278px; top: 122px; }
.badge-3 { left: 1279px; top: 838px; }
.tooltip {
  position: absolute;
  left: 1232px;
  top: 983px;
  width: 460px;
  height: 39px;
  padding-left: 13px;
  line-height: 38px;
  white-space: nowrap;
  background: #dedede;
  color: #444;
  border-radius: 2px;
  box-shadow: 0 4px 12px rgba(0,0,0,.25);
}
```
